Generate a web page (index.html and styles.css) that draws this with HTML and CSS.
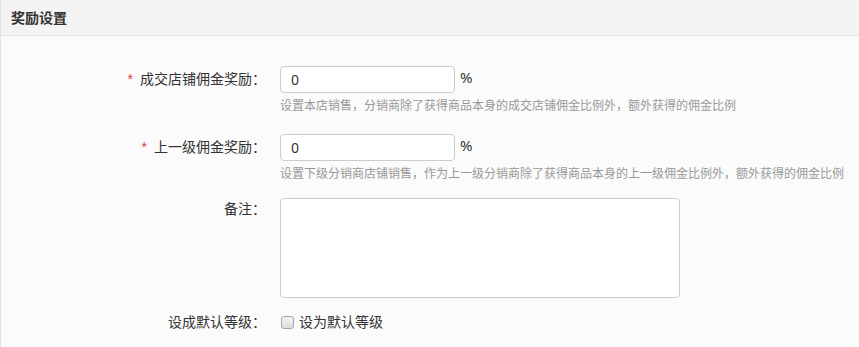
FILE: index.html
```html
<!DOCTYPE html>
<html>
    <head>
        <meta charset="UTF-8">
        <title>奖励设置</title>
        <link rel="stylesheet" href="styles.css">
    </head>
    <body>
        <div class="panel">
            <div class="panel-head">奖励设置</div>
            <form class="panel-body">
                <div class="row">
                    <label class="row-label"><span class="req">*</span>成交店铺佣金奖励：</label>
                    <div class="row-ctrl">
                        <div class="line">
                            <input type="text" class="txt" value="0">
                            <span class="unit">%</span>
                        </div>
                        <p class="help">设置本店销售，分销商除了获得商品本身的成交店铺佣金比例外，额外获得的佣金比例</p>
                    </div>
                </div>
                <div class="row">
                    <label class="row-label"><span class="req">*</span>上一级佣金奖励：</label>
                    <div class="row-ctrl">
                        <div class="line">
                            <input type="text" class="txt" value="0">
                            <span class="unit">%</span>
                        </div>
                        <p class="help">设置下级分销商店铺销售，作为上一级分销商除了获得商品本身的上一级佣金比例外，额外获得的佣金比例</p>
                    </div>
                </div>
                <div class="row row-memo">
                    <label class="row-label">备注：</label>
                    <div class="row-ctrl">
                        <textarea class="memo"></textarea>
                    </div>
                </div>
                <div class="row row-check">
                    <label class="row-label">设成默认等级：</label>
                    <div class="row-ctrl">
                        <label class="check"><input type="checkbox">设为默认等级</label>
                    </div>
                </div>
            </form>
        </div>
    </body>
</html>
```

FILE: styles.css
```css
:root{
    --line: #e4e4e4;
    --text: #333;
    --muted: #999;
}

body{
    margin: 0;
    background-color: #fbfbfb;
    color: var(--text);
    font-family: "Noto Sans", "Noto Sans CJK SC", sans-serif;
    font-size: 14px;
}

.panel{
    border-left: 1px solid var(--line);
    height: 347px;
    box-sizing: border-box;
}

/*----------- 상단 제목 -----------*/
.panel-head{
    height: 35px;
    line-height: 35px;
    padding-left: 10px;
    background-color: #f3f3f3;
    border-bottom: 1px solid var(--line);
    font-weight: bold;
    font-size: 14px;
}

.panel-body{
    padding-top: 30px;
}

/*----------- 폼 줄 -----------*/
.row{
    display: flex;
    margin-bottom: 20px;
}
.row-label{
    width: 265px;
    flex: none;
    text-align: right;
    line-height: 26px;
}
.req{
    color: #e4393c;
    margin-right: 7px;
    font-family: "Liberation Sans", sans-serif;
}
.row-ctrl{
    margin-left: 14px;
}
.line{
    display: flex;
    align-items: flex-start;
}

.txt{
    width: 175px;
    height: 27px;
    box-sizing: border-box;
    border: 1px solid #ccc;
    border-radius: 4px;
    background-color: #fff;
    padding: 0 10px;
    font: inherit;
    font-size: 14px;
    color: var(--text);
}
.unit{
    margin-left: 5px;
    line-height: 22px;
    font-size: 15px;
}

.help{
    margin: 5px 0 0;
    font-size: 12px;
    line-height: 16px;
    color: var(--muted);
}

/*----------- 비고 -----------*/
.row-memo{
    margin-top: -4px;
    margin-bottom: 11px;
}
.row-memo .row-label{
    line-height: 22px;
}
.memo{
    display: block;
    width: 400px;
    height: 100px;
    box-sizing: border-box;
    border: 1px solid #ccc;
    border-radius: 4px;
    background-color: #fff;
    resize: none;
    margin: 0;
}

/*----------- 체크박스 -----------*/
.check{
    display: flex;
    align-items: center;
    line-height: 26px;
}
.check input{
    appearance: none;
    width: 13px;
    height: 13px;
    margin: 0 5px 0 1px;
    border: 1px solid #a6a6a6;
    border-radius: 3px;
    background: linear-gradient(#f4f4f4, #dcdcdc);
}
```
